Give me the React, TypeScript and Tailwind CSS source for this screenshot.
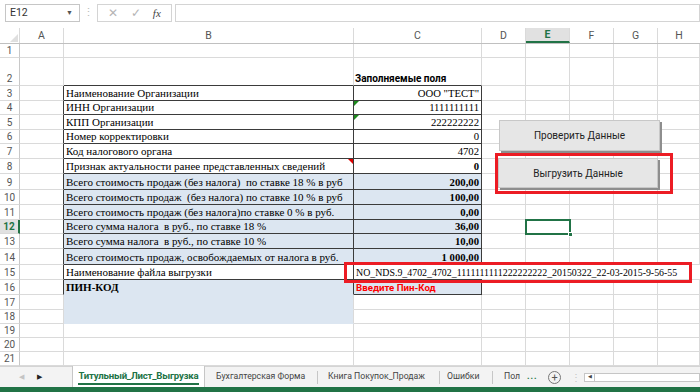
import React from "react";

// Excel-like sheet: "Титульный_Лист_Выгрузка"

const serif = "font-['Liberation_Serif',serif]";
const ui = "font-['Roboto','Liberation_Sans',Arial,sans-serif]";

type Row = {
  n: number;
  h: string;
  b?: string;
  c?: string;
  cBold?: boolean;
  blue?: boolean;
};

const rows: Row[] = [
  { n: 3, h: "h-[15px]", b: "Наименование Организации", c: 'ООО "ТЕСТ"' },
  { n: 4, h: "h-[14px]", b: "ИНН Организации", c: "1111111111" },
  { n: 5, h: "h-[15px]", b: "КПП Организации", c: "222222222" },
  { n: 6, h: "h-[14px]", b: "Номер корректировки", c: "0" },
  { n: 7, h: "h-[15px]", b: "Код налогового органа", c: "4702" },
  { n: 8, h: "h-[15px]", b: "Признак актуальности ранее представленных сведений", c: "0", cBold: true },
  { n: 9, h: "h-[16px]", b: "Всего стоимость продаж (без налога)  по ставке 18 % в руб", c: "200,00", cBold: true, blue: true },
  { n: 10, h: "h-[15px]", b: "Всего стоимость продаж  (без налога) по ставке 10 % в руб", c: "100,00", cBold: true, blue: true },
  { n: 11, h: "h-[15px]", b: "Всего стоимость продаж (без налога)по ставке 0 % в руб.", c: "0,00", cBold: true, blue: true },
  { n: 12, h: "h-[14px]", b: "Всего сумма налога  в руб., по ставке 18 %", c: "36,00", cBold: true, blue: true },
  { n: 13, h: "h-[15px]", b: "Всего сумма налога  в руб., по ставке 10 %", c: "10,00", cBold: true, blue: true },
  { n: 14, h: "h-[16px]", b: "Всего стоимость продаж, освобождаемых от налога в руб.", c: "1 000,00", cBold: true, blue: true },
];

const tailCols = ["w-[44px]", "w-[44px]", "w-[44px]", "w-[44px]", "flex-1"];

function RowHead({ n, sel }: { n: number; sel?: boolean }) {
  return (
    <div
      className={`w-[20px] shrink-0 flex items-end justify-center text-[10px] leading-[13px] border-b border-[#dadada] ${
        sel
          ? "bg-[#e1e1e1] text-[#217346] font-bold border-r-2 border-r-[#217346]"
          : "text-[#555] border-r border-r-[#c8c8c8]"
      }`}
    >
      {n}
    </div>
  );
}

function Tail({ noLines }: { noLines?: boolean }) {
  return (
    <>
      {tailCols.map((w, i) => (
        <div
          key={i}
          className={`${w} shrink-0 border-b ${noLines ? "border-b-[#dadada]" : "border-r border-[#dadada]"}`}
        />
      ))}
    </>
  );
}

function EmptyRow({ n, h, blueB }: { n: number; h: string; blueB?: boolean }) {
  return (
    <div className={`flex ${h}`}>
      <RowHead n={n} />
      <div className="w-[44px] shrink-0 border-r border-b border-[#dadada]" />
      <div
        className={`w-[290px] shrink-0 border-r border-b ${
          blueB ? "bg-[#dce6f1] border-r-[#dadada] border-b-[#dce6f1]" : "border-[#dadada]"
        }`}
      />
      <div className="w-[128px] shrink-0 border-r border-b border-[#dadada]" />
      <Tail />
    </div>
  );
}

export default function App() {
  return (
    <div className={`relative w-[700px] h-[392px] bg-white overflow-hidden ${ui}`}>
      {/* formula bar */}
      <div className="h-[28px] flex items-start pt-[4px]">
        <div className="ml-[5px] w-[75px] h-[18px] border border-[#c6c6c6] flex items-center pl-[4px] pr-[6px] text-[10.5px] text-[#333]">
          E12
          <span className="ml-auto text-[7px] text-[#555]">▼</span>
        </div>
        <div className="w-[17px] h-[18px] flex items-center justify-center text-[11px] text-[#bbb]">⋮</div>
        <div className="w-[75px] h-[18px] border border-[#d4d4d4] flex items-center justify-around px-[4px] text-[12px] text-[#b5b5b5]">
          <span>✕</span>
          <span>✓</span>
          <span className={`${serif} italic text-[11px] text-[#444]`}>fx</span>
        </div>
        <div className="ml-[3px] flex-1 h-[18px] border border-[#d4d4d4]" />
      </div>

      {/* column headers */}
      <div className="flex h-[16px] text-[10.5px] text-[#555] border-b border-[#c0c0c0]">
        <div className="w-[20px] shrink-0 border-r border-[#dadada] flex items-end justify-end p-[1px]">
          <div className="w-0 h-0 border-l-[8px] border-l-transparent border-b-[8px] border-b-[#dfdfdf]" />
        </div>
        <div className="w-[44px] shrink-0 border-r border-[#dadada] flex items-center justify-center">A</div>
        <div className="w-[290px] shrink-0 border-r border-[#dadada] flex items-center justify-center">B</div>
        <div className="w-[128px] shrink-0 border-r border-[#dadada] flex items-center justify-center">C</div>
        <div className="w-[44px] shrink-0 border-r border-[#dadada] flex items-center justify-center">D</div>
        <div className="w-[44px] shrink-0 border-r border-[#dadada] flex items-center justify-center bg-[#e1e1e1] text-[#217346] font-bold border-b-2 border-b-[#217346]">E</div>
        <div className="w-[44px] shrink-0 border-r border-[#dadada] flex items-center justify-center">F</div>
        <div className="w-[44px] shrink-0 border-r border-[#dadada] flex items-center justify-center">G</div>
        <div className="flex-1 flex items-center justify-center">H</div>
      </div>

      {/* row 1 */}
      <EmptyRow n={1} h="h-[14px]" />

      {/* row 2 */}
      <div className="flex h-[28px]">
        <RowHead n={2} />
        <div className="w-[44px] shrink-0 border-r border-b border-[#dadada]" />
        <div className="w-[290px] shrink-0 border-r border-r-[#dadada] border-b border-b-[#3b3b3b]" />
        <div className="w-[128px] shrink-0 border-r border-r-[#dadada] border-b border-b-[#3b3b3b] flex items-end pl-[1px] text-[10px] font-bold text-black leading-[13px]">
          Заполняемые поля
        </div>
        <Tail />
      </div>

      {/* table rows 3-14 */}
      {rows.map((r) => (
        <div key={r.n} className={`flex ${r.h}`}>
          <RowHead n={r.n} sel={r.n === 12} />
          <div className="w-[44px] shrink-0 border-b border-b-[#dadada] border-r border-r-[#3b3b3b]" />
          <div
            className={`relative w-[290px] shrink-0 border-r border-b border-[#3b3b3b] flex items-end pl-[2px] text-[11px] leading-[13px] whitespace-pre text-black ${serif} ${
              r.blue ? "bg-[#dce6f1]" : ""
            }`}
          >
            {r.b}
            {r.n === 8 && (
              <span className="absolute top-0 right-0 w-0 h-0 border-l-[5px] border-l-transparent border-t-[5px] border-t-[#e00000]" />
            )}
          </div>
          <div
            className={`relative w-[128px] shrink-0 border-r border-b border-[#3b3b3b] flex items-end justify-end pr-[2px] text-[10.7px] leading-[13px] text-black ${serif} ${
              r.blue ? "bg-[#dce6f1]" : ""
            } ${r.cBold ? "font-bold" : ""}`}
          >
            {r.c}
            {(r.n === 4 || r.n === 5) && (
              <span className="absolute top-0 left-0 w-0 h-0 border-r-[5px] border-r-transparent border-t-[5px] border-t-[#1e8a1e]" />
            )}
          </div>
          <Tail />
        </div>
      ))}

      {/* row 15 */}
      <div className="flex h-[15px]">
        <RowHead n={15} />
        <div className="w-[44px] shrink-0 border-b border-b-[#dadada] border-r border-r-[#3b3b3b]" />
        <div className={`w-[290px] shrink-0 border-r border-b border-[#3b3b3b] flex items-end pl-[2px] text-[11px] leading-[13px] text-black ${serif}`}>
          Наименование файла выгрузки
        </div>
        <div className={`relative z-10 w-[128px] shrink-0 border-b border-[#3b3b3b] flex items-end pl-[2px] text-[9.9px] leading-[13px] whitespace-nowrap text-black ${serif}`}>
          NO_NDS.9_4702_4702_1111111111222222222_20150322_22-03-2015-9-56-55
        </div>
        <Tail noLines />
      </div>

      {/* row 16 */}
      <div className="flex h-[15px]">
        <RowHead n={16} />
        <div className="w-[44px] shrink-0 border-b border-b-[#dadada] border-r border-r-[#3b3b3b]" />
        <div className={`w-[290px] shrink-0 bg-[#dce6f1] border-r border-r-[#3b3b3b] border-b border-b-[#dce6f1] flex items-end pl-[2px] text-[11px] leading-[13px] font-bold text-black ${serif}`}>
          ПИН-КОД
        </div>
        <div className="w-[128px] shrink-0 bg-[#dce6f1] border-r border-b border-[#3b3b3b] flex items-end pl-[2px] text-[9.7px] leading-[13px] font-bold text-[#ff0000]">
          Введите Пин-Код
        </div>
        <Tail />
      </div>

      <EmptyRow n={17} h="h-[15px]" blueB />
      <EmptyRow n={18} h="h-[14px]" blueB />
      <EmptyRow n={19} h="h-[14px]" />
      <EmptyRow n={20} h="h-[14px]" />
      <EmptyRow n={21} h="h-[14px]" />

      {/* sheet tabs */}
      <div className="flex h-[21px] bg-[#f3f3f3] border-t border-[#d4d4d4] text-[8.7px] text-[#444]">
        <div className="w-[72px] shrink-0 flex items-center">
          <span className="ml-[19px] text-[7px] text-[#c4c4c4]">◀</span>
          <span className="ml-[13px] text-[7px] text-[#222]">▶</span>
        </div>
        <div className="w-[133px] shrink-0 bg-white border-x border-[#c6c6c6] flex justify-center -mt-[1px]">
          <span className="mt-[3px] h-[16px] font-bold text-[#217346] border-b-2 border-[#217346] leading-[14px] px-[1px] text-[9.6px] tracking-[-0.2px]">
            Титульный_Лист_Выгрузка
          </span>
        </div>
        <div className="w-[112px] shrink-0 flex items-center pl-[11px] whitespace-nowrap">Бухгалтерская Форма</div>
        <div className="w-px h-[13px] mt-[4px] bg-[#c6c6c6]" />
        <div className="w-[121px] shrink-0 flex items-center pl-[10px] whitespace-nowrap">Книга Покупок_Продаж</div>
        <div className="w-px h-[13px] mt-[4px] bg-[#c6c6c6]" />
        <div className="w-[52px] shrink-0 flex items-center pl-[7px]">Ошибки</div>
        <div className="w-px h-[13px] mt-[4px] bg-[#c6c6c6]" />
        <div className="w-[34px] shrink-0 flex items-center pl-[11px]">Пол</div>
        <div className="w-[14px] shrink-0 flex items-center font-bold text-[#217346] tracking-[1px]">...</div>
        <div className="w-[27px] shrink-0 flex items-center justify-center">
          <span className="w-[13px] h-[13px] rounded-full border border-[#777] flex items-center justify-center text-[11px] leading-none text-[#555]">+</span>
        </div>
        <div className="w-[16px] shrink-0 flex items-center justify-center text-[10px] text-[#c4c4c4]">⋮</div>
        <div className="flex-1 flex items-center">
          <div className="w-full h-[9px] border border-[#c6c6c6] bg-white flex items-center">
            <span className="w-[10px] h-full border-r border-[#c6c6c6] flex items-center justify-center text-[5px] text-[#444]">◀</span>
          </div>
        </div>
      </div>
      <div className="h-[5px] bg-[#217346]" />

      {/* floating controls over the sheet */}
      <button className="absolute left-[499px] top-[120px] w-[161px] h-[31px] bg-[#e6e6e6] border border-[#c8c8c8] shadow-[2px_2px_0_#8e8e8e] text-[10px] text-[#222]">
        Проверить Данные
      </button>
      <button className="absolute left-[498px] top-[158px] w-[160px] h-[30px] bg-[#e6e6e6] border border-[#c8c8c8] shadow-[2px_2px_0_#8e8e8e] text-[10px] text-[#222]">
        Выгрузить Данные
      </button>
      <div className="absolute left-[495px] top-[153px] w-[178px] h-[41px] border-[3px] border-[#ec1c24]" />
      <div className="absolute left-[344px] top-[262px] w-[348px] h-[21px] border-[3px] border-[#ec1c24] z-20" />

      {/* selected cell E12 */}
      <div className="absolute left-[525px] top-[219px] w-[46px] h-[16px] border-2 border-[#217346]">
        <div className="absolute -right-[4px] -bottom-[4px] w-[5px] h-[5px] bg-[#217346] border border-white" />
      </div>
    </div>
  );
}
